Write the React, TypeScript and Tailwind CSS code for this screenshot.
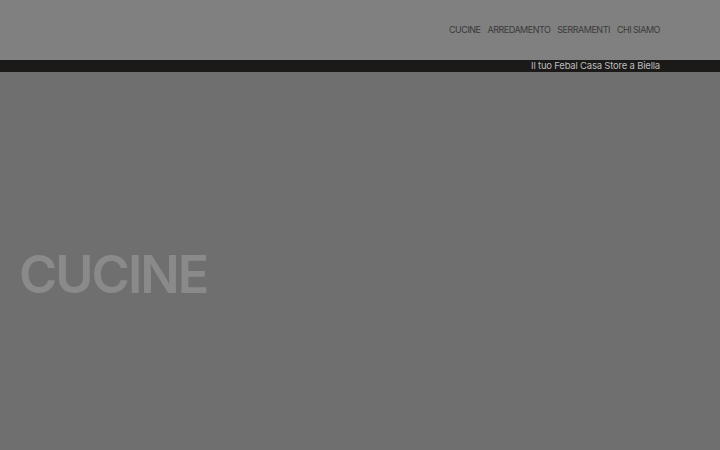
const links = ['CUCINE', 'ARREDAMENTO', 'SERRAMENTI', 'CHI SIAMO'];

export default function App() {
  return (
    <div className="w-[720px] h-[450px] overflow-hidden flex flex-col bg-[#6f6f6f]" style={{ fontFamily: 'Inter, "Liberation Sans", sans-serif' }}>
      {/* Header */}
      <header className="h-[60px] shrink-0 bg-[#808080] flex items-center justify-end pr-[60px]">
        <nav className="flex items-center gap-[7px]">
          {links.map((l) => (
            <a key={l} className="text-[9px] tracking-[-0.5px] text-[#3a3a3a]">
              {l}
            </a>
          ))}
        </nav>
      </header>

      {/* Top bar */}
      <div className="h-[12px] shrink-0 bg-[#1c1a19] flex items-center justify-end pr-[60px]">
        <span className="text-[9.5px] leading-none tracking-[-0.2px] text-[#bdbdbd]">Il tuo Febal Casa Store a Biella</span>
      </div>

      {/* Hero */}
      <main className="flex-1 flex items-center pl-[19px] pt-[28px]">
        <h1 className="text-[52px] font-semibold tracking-[-2px] leading-none text-[#8a8a8a]">CUCINE</h1>
      </main>
    </div>
  );
}
